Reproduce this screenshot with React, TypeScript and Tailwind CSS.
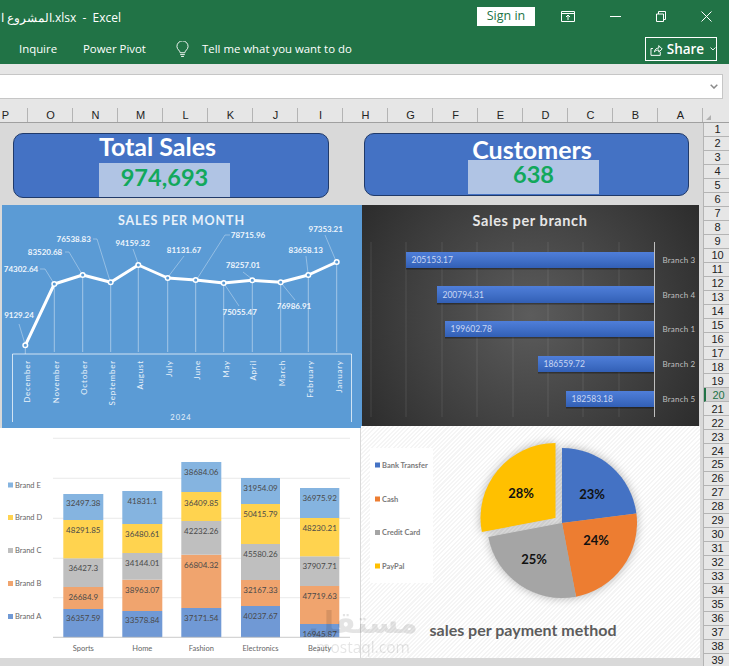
import React from "react";

const columns = ["P","O","N","M","L","K","J","I","H","G","F","E","D","C","B","A"];
const rows = Array.from({ length: 39 }, (_, i) => i + 1);

const linePts: [number, number][] = [
  [25.3,345.3],[54.3,284],[82.7,275],[110.7,282.3],[138.3,265],[167.7,278],
  [195.7,280],[223.7,283],[252.3,280.3],[280.7,282.3],[308.3,275],[336.7,262],
];
const months: [string, number][] = [
  ["December",27],["November",55.7],["October",83.7],["September",112],["August",140],["July",169],
  ["June",197],["May",225.7],["April",253],["March",281.7],["February",310],["January",338.7],
];
const lineLabels: { t: string; x: number; y: number; l: string }[] = [
  { t:"9129.24", x:19, y:314.7, l:"19,324 25,344" },
  { t:"74302.64", x:21, y:269.3, l:"40,269 45,269 53,282" },
  { t:"83520.68", x:45, y:252, l:"65,252 69,252 82,274" },
  { t:"76538.83", x:73.7, y:239, l:"93,239 97,239 110,281" },
  { t:"94159.32", x:132.7, y:243, l:"133,249 138,263" },
  { t:"81131.67", x:184, y:250, l:"184,256 168,277" },
  { t:"78715.96", x:248, y:235, l:"230,235 225,235 197,279" },
  { t:"78257.01", x:243, y:265, l:"243,272 252,279" },
  { t:"97353.21", x:325.7, y:229, l:"325,235 336,261" },
  { t:"83658.13", x:305.7, y:249.7, l:"306,256 308,273" },
  { t:"76986.91", x:294, y:306, l:"295,300 282,284" },
  { t:"75055.47", x:239.7, y:312, l:"239,306 225,285" },
];

function MonthChart() {
  return (
    <svg viewBox="2 205 360 223" className="block w-[360px] h-[223px] bg-[#5b9bd5]" fontFamily="Lato, sans-serif">
      <text x="181.500" y="224.500" textAnchor="middle" fontSize="12.500" fontWeight="700" letterSpacing="0.9" fill="#e8f1fa">SALES PER MONTH</text>
      {linePts.map(([x, y], i) => (
        <line key={i} x1={x} y1={y} x2={x} y2={i === 0 ? 354 : 352} stroke="#ffffff" strokeOpacity="0.55" strokeWidth="0.8" />
      ))}
      {lineLabels.map((l) => (
        <polyline key={l.t} points={l.l} fill="none" stroke="#ffffff" strokeOpacity="0.5" strokeWidth="0.7" />
      ))}
      <polyline points={linePts.map((p) => p.join(",")).join(" ")} fill="none" stroke="#ffffff" strokeWidth="3" strokeLinejoin="round" />
      {linePts.map(([x, y], i) => (
        <circle key={i} cx={x} cy={y} r="2.300" fill="#5b9bd5" stroke="#ffffff" strokeWidth="1.500" />
      ))}
      {lineLabels.map((l) => (
        <text key={l.t} x={l.x} y={l.y + 3} textAnchor="middle" fontSize="8" fontWeight="700" fill="#eef5fc">{l.t}</text>
      ))}
      <polyline points="12.500,422 12.500,354 351.500,354 351.500,422" fill="none" stroke="#ffffff" strokeOpacity="0.9" strokeWidth="0.8" />
      {months.map(([m, x]) => (
        <text key={m} transform={`translate(${x + 3},360) rotate(-90)`} textAnchor="end" fontSize="8" letterSpacing="0.8" fill="#e8f1fa">{m}</text>
      ))}
      <text x="181" y="420" textAnchor="middle" fontSize="7.500" letterSpacing="1" fill="#e8f1fa">2024</text>
    </svg>
  );
}

const branches = [
  { n:"Branch 3", v:"205153.17", x:406, y:252, h:16 },
  { n:"Branch 4", v:"200794.31", x:437, y:286, h:17 },
  { n:"Branch 1", v:"199602.78", x:445, y:321, h:16 },
  { n:"Branch 2", v:"186559.72", x:538, y:356, h:16 },
  { n:"Branch 5", v:"182583.18", x:566, y:391, h:16 },
];

function BranchChart() {
  return (
    <svg viewBox="362 205 337 221" className="block w-[337px] h-[221px] bg-[radial-gradient(circle,#5c5c5c,#2c2c2c)]" fontFamily="Lato, sans-serif">
      <defs>
        <linearGradient id="barFill" x1="0" y1="0" x2="0" y2="1">
          <stop offset="0" stopColor="#4f7ed9" />
          <stop offset="0.5" stopColor="#4170c8" />
          <stop offset="1" stopColor="#325fb5" />
        </linearGradient>
      </defs>
      <text x="530" y="225.500" textAnchor="middle" fontSize="14.500" fontWeight="700" letterSpacing="0.6" fill="#e6e6e6">Sales per branch</text>
      {[371,406,442,477,513,548,583,619].map((x) => (
        <line key={x} x1={x} y1="242" x2={x} y2="417" stroke="#ffffff" strokeOpacity="0.1" strokeWidth="1" />
      ))}
      {branches.map((b) => (
        <g key={b.n}>
          <rect x={b.x} y={b.y + 1.500} width={654.500 - b.x} height={b.h} fill="#000000" fillOpacity="0.35" />
          <rect x={b.x} y={b.y} width={654.500 - b.x} height={b.h} fill="url(#barFill)" />
          <text x={b.x + 5.500} y={b.y + b.h / 2 + 3} fontSize="8.500" fill="#c9d6f2">{b.v}</text>
          <text x="662.500" y={b.y + b.h / 2 + 3} fontSize="8" letterSpacing="0.2" fill="#bfbfbf">{b.n}</text>
        </g>
      ))}
      <line x1="654.500" y1="242" x2="654.500" y2="417" stroke="#bfbfbf" strokeWidth="1" />
    </svg>
  );
}

const stackColors = ["#7099d5", "#f0a46e", "#bfbfbf", "#ffd34f", "#85b4e0"];
const stacks = [
  { n:"Sports", x:63.300, w:40, tops:[609,587,558.300,520,494], vals:["36357.59","26684.9","36427.3","48291.85","32497.38"], ly:[621,600,571,533,506] },
  { n:"Home", x:122.300, w:40, tops:[611,579.700,553,524,491], vals:["33578.84","38963.07","34144.01","36480.61","41831.1"], ly:[623,592.500,565.500,536.500,503.500] },
  { n:"Fashion", x:181.300, w:40, tops:[608,554.700,521,492,462], vals:["37171.54","66804.32","42232.26","36409.85","38684.06"], ly:[620.500,567.500,534,505.500,474.500] },
  { n:"Electronics", x:241, w:39, tops:[606,580,544,504,478], vals:["40237.67","32167.33","45580.26","50415.79","31954.09"], ly:[618.500,592.500,556.500,516.500,491] },
  { n:"Beauty", x:300, w:39.300, tops:[624,586,556.300,518,488], vals:["16945.87","47719.63","37907.71","48230.21","36975.92"], ly:[636.500,598.500,568.500,530.500,501] },
];
const brandLegend: [string, string, number][] = [
  ["Brand E", stackColors[4], 485],
  ["Brand D", stackColors[3], 517.500],
  ["Brand C", stackColors[2], 550.500],
  ["Brand B", stackColors[1], 583.500],
  ["Brand A", stackColors[0], 616.500],
];

function BrandChart() {
  return (
    <svg viewBox="0 428 360 230" className="block w-[360px] h-[230px] bg-white" fontFamily="Lato, sans-serif">
      {[438.300,478.300,518.300,558.300,597.700].map((y) => (
        <line key={y} x1="53" y1={y} x2="350" y2={y} stroke="#e4e4e4" strokeWidth="0.8" />
      ))}
      {stacks.map((s) => (
        <g key={s.n}>
          {s.tops.map((top, i) => {
            const bottom = i === 0 ? 637.300 : s.tops[i - 1];
            return <rect key={i} x={s.x} y={top} width={s.w} height={bottom - top} fill={stackColors[i]} />;
          })}
          {s.vals.map((v, i) => (
            <text key={v} x={s.x + s.w / 2} y={s.ly[i]} textAnchor="middle" fontSize="8" fill="#4a4a4a">{v}</text>
          ))}
          <text x={s.x + s.w / 2} y="651" textAnchor="middle" fontSize="7.500" fill="#666666">{s.n}</text>
        </g>
      ))}
      <line x1="53" y1="637.300" x2="350" y2="637.300" stroke="#bdbdbd" strokeWidth="0.8" />
      {brandLegend.map(([n, c, y]) => (
        <g key={n}>
          <rect x="8" y={y - 2.500} width="5" height="5" fill={c} />
          <text x="15" y={y + 2.500} fontSize="7.500" fill="#666666">{n}</text>
        </g>
      ))}
    </svg>
  );
}

function slice(cx: number, cy: number, r: number, a0: number, a1: number) {
  const rad = (a: number) => (a * Math.PI) / 180;
  const x0 = cx + r * Math.sin(rad(a0));
  const y0 = cy - r * Math.cos(rad(a0));
  const x1 = cx + r * Math.sin(rad(a1));
  const y1 = cy - r * Math.cos(rad(a1));
  return `M${cx} ${cy}L${x0} ${y0}A${r} ${r} 0 ${a1 - a0 > 180 ? 1 : 0} 1 ${x1} ${y1}Z`;
}

const payLegend: [string, string, number][] = [
  ["Bank Transfer", "#4472c4", 465],
  ["Cash", "#ed7d31", 499],
  ["Credit Card", "#a5a5a5", 532.500],
  ["PayPal", "#ffc000", 566],
];

function PayChart() {
  return (
    <svg viewBox="361 426 339 232" className="block w-[339px] h-[232px] bg-[repeating-linear-gradient(135deg,#ffffff_0px,#ffffff_1.5px,#f5f5f5_1.5px,#f5f5f5_3px)]" fontFamily="Lato, sans-serif">
      <rect x="370" y="448" width="63" height="135" fill="#ffffff" />
      {payLegend.map(([n, c, y]) => (
        <g key={n}>
          <rect x="375" y={y - 2.500} width="5" height="5" fill={c} />
          <text x="382" y={y + 2.500} fontSize="7.500" fontWeight="700" fill="#7a7a7a">{n}</text>
        </g>
      ))}
      <g className="drop-shadow-[0_0_5px_rgba(0,0,0,0.3)]">
        <path d={slice(562, 523, 75, 0, 82.800)} fill="#4472c4" />
        <path d={slice(562, 523, 75, 82.800, 169.200)} fill="#ed7d31" />
        <path d={slice(562, 523, 75, 169.200, 259.200)} fill="#a5a5a5" />
        <path d={slice(555.500, 518, 75, 259.200, 360)} fill="#ffc000" />
      </g>
      <g fontSize="13" fontWeight="700" fill="#111111" textAnchor="middle">
        <text x="592" y="499">23%</text>
        <text x="596" y="545">24%</text>
        <text x="534" y="564">25%</text>
        <text x="521" y="498">28%</text>
      </g>
      <text x="523" y="636" textAnchor="middle" fontSize="16" fontWeight="700" fill="#5c5c5c">sales per payment method</text>
    </svg>
  );
}

function TitleBar() {
  return (
    <div className="flex h-[32px] items-center bg-[#217346] text-white">
      <div className="flex w-[121px] justify-end overflow-hidden whitespace-nowrap pt-[4px] text-[12px] font-['Open_Sans',sans-serif]">
        <span className="shrink-0">المشروع العملي.xlsx&nbsp; - &nbsp;Excel</span>
      </div>
      <div className="ml-[356px] flex h-[19px] w-[58px] items-center justify-center bg-white text-[12.5px] text-[#217346] font-['Open_Sans',sans-serif]">Sign in</div>
      <svg viewBox="0 0 14 11" className="ml-[26px] h-[11px] w-[14px]" fill="none" stroke="#fff" strokeWidth="1">
        <path d="M.5.5h13v10H.5zM.5 2.500h13M7 9V4.200M5 6l2-2 2 2" />
      </svg>
      <svg viewBox="0 0 11 1" className="ml-[35px] h-[1px] w-[11px]"><rect width="11" height="1" fill="#fff" /></svg>
      <svg viewBox="0 0 10 11" className="ml-[35px] h-[11px] w-[10px]" fill="none" stroke="#fff" strokeWidth="1">
        <path d="M.5 3h7v7.500h-7zM2.500 3V.5h7v8H7.500" />
      </svg>
      <svg viewBox="0 0 11 11" className="ml-[35px] h-[11px] w-[11px]" fill="none" stroke="#fff" strokeWidth="1">
        <path d="M.5.5l10 10M10.500.5l-10 10" />
      </svg>
    </div>
  );
}

function RibbonTabs() {
  return (
    <div className="flex h-[32px] items-center bg-[#217346] pt-[2px] text-[11.4px] text-white font-['Open_Sans',sans-serif]">
      <span className="ml-[19px] w-[64px]">Inquire</span>
      <span className="w-[93px]">Power Pivot</span>
      <svg viewBox="0 0 14 18" className="h-[17px] w-[13px]" fill="none" stroke="#fff" strokeWidth="1">
        <path d="M4.500 12.500C4.300 10 1 9 1 5.700a6 6 0 0 1 12 0c0 3.300-3.300 4.300-3.500 6.800zM4.500 14.500h5M5.500 16.500h3" />
      </svg>
      <span className="ml-[13px]">Tell me what you want to do</span>
      <div className="ml-auto mr-[12px] flex h-[24px] w-[72px] items-center border border-white pl-[4px]">
        <svg viewBox="0 0 13 13" className="h-[13px] w-[13px]" fill="none" stroke="#fff" strokeWidth="1">
          <path d="M3 5.500H1v7h9.500V9M4.500 9c.3-2.500 2-4 4.500-4V2.500L12.500 6 9 9V7c-2 0-3.300.6-4.500 2z" />
        </svg>
        <span className="ml-[4px] text-[13.5px] font-semibold">Share</span>
        <svg viewBox="0 0 6 4" className="ml-[6px] h-[4px] w-[6px]" fill="none" stroke="#fff" strokeWidth="1"><path d="M.5.5L3 3l2.500-2.500" /></svg>
      </div>
    </div>
  );
}

function FormulaBar() {
  return (
    <div className="bg-[#e6e6e6] pt-[10px]">
      <div className="mr-[6px] flex h-[25px] items-center justify-end border-y border-r border-[#c6c6c6] bg-white pr-[4px]">
        <svg viewBox="0 0 8 5" className="h-[5px] w-[8px]" fill="none" stroke="#8a8a8a" strokeWidth="1.500"><path d="M.7.7L4 4 7.300.7" /></svg>
      </div>
    </div>
  );
}

function ColumnHeader() {
  return (
    <div className="flex h-[24px] items-stretch overflow-hidden border-b border-[#a0a0a0] bg-[#e6e6e6] pt-[9px] font-['Liberation_Sans',sans-serif] text-[11px] text-[#222222]">
      <div className="flex shrink-0 -ml-[17px]">
        {columns.map((c) => (
          <div key={c} className="flex w-[45px] items-center justify-center border-r border-[#b4b4b4] pl-px">{c}</div>
        ))}
      </div>
      <div className="flex flex-1 items-end pb-[2px] pl-[3px]">
        <div className="h-0 w-0 border-b-[5px] border-l-[5px] border-b-[#b0b0b0] border-l-transparent" />
      </div>
    </div>
  );
}

function RowHeader() {
  return (
    <div className="w-[26px] shrink-0 border-l border-[#b4b4b4] bg-[#e6e6e6] font-['Liberation_Sans',sans-serif] text-[11px] text-[#222222]">
      {rows.map((r) =>
        r === 20 ? (
          <div key={r} className="flex h-[13.98px] items-center justify-center border-b border-l-2 border-[#b4b4b4] border-l-[#217346] bg-[#d2d2d2] pl-[2px] text-[#217346]">{r}</div>
        ) : (
          <div key={r} className="flex h-[13.98px] items-center justify-center border-b border-[#b4b4b4] pl-[2px]">{r}</div>
        )
      )}
    </div>
  );
}

function KpiCard({ title, value, cls, head, boxOffset }: { title: string; value: string; cls: string; head: string; boxOffset: string }) {
  return (
    <div className={`flex flex-col items-center rounded-[10px] border border-[#203a6a] bg-[#4472c4] ${cls}`}>
      <div className={`flex w-full items-center justify-center font-['Lato',sans-serif] text-[25px] font-bold text-white ${head}`}>{title}</div>
      <div className={`flex w-full justify-center ${boxOffset}`}>
        <div className="flex h-[34px] w-[131px] items-center justify-center bg-[#b0c4e4] pb-[4px] font-['Lato',sans-serif] text-[23.6px] font-bold leading-none text-[#12a85c]">{value}</div>
      </div>
    </div>
  );
}

function Watermark() {
  return (
    <div className="pointer-events-none absolute left-[313px] top-[606px] flex w-[100px] flex-col items-center text-[#000000] opacity-[0.1]">
      <span className="font-['DejaVu_Sans',sans-serif] text-[30px] font-bold leading-[34px]">مستقل</span>
      <span className="font-['Open_Sans',sans-serif] text-[15.5px] leading-[15px]">mostaql.com</span>
    </div>
  );
}

export default function App() {
  return (
    <div className="relative h-[666px] w-[729px] overflow-hidden bg-[#d9d9d9]">
      <TitleBar />
      <RibbonTabs />
      <FormulaBar />
      <ColumnHeader />
      <div className="flex">
        <div className="flex w-[703px] shrink-0">
          <div className="w-[362px] shrink-0">
            <KpiCard title="Total Sales" value="974,693" cls="ml-[13px] mt-[10px] h-[65px] w-[316px]" head="h-[29px] pr-[27px] pb-[5px] leading-[24px]" boxOffset="pr-[13px]" />
            <div className="ml-[2px] mt-[7px]"><MonthChart /></div>
            <BrandChart />
          </div>
          <div className="flex-1">
            <KpiCard title="Customers" value="638" cls="ml-[2px] mt-[10px] h-[63px] w-[325px]" head="h-[26px] pl-[11px] pt-[4px] leading-[22px]" boxOffset="pl-[14px]" />
            <div className="mt-[9px]"><BranchChart /></div>
            <div className="-ml-px"><PayChart /></div>
          </div>
        </div>
        <RowHeader />
      </div>
      <Watermark />
    </div>
  );
}
